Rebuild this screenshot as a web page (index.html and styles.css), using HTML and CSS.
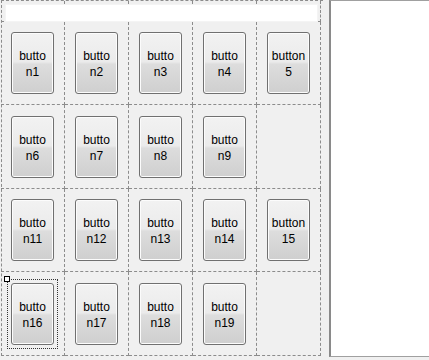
FILE: index.html
```html
<!DOCTYPE html>
<html>
<head>
<meta charset="utf-8">
<link rel="stylesheet" href="styles.css">
</head>
<body>
<div class="wrap">
  <div class="designer">
    <div class="top">
      <div class="tcell c1"></div><div class="tcell c2"></div><div class="tcell c3"></div><div class="tcell c4"></div><div class="tcell c5"></div>
      <div class="textbox"></div>
    </div>
    <div class="grid">
      <div class="cell"><button class="btn">butto<br>n1</button></div>
      <div class="cell"><button class="btn">butto<br>n2</button></div>
      <div class="cell"><button class="btn">butto<br>n3</button></div>
      <div class="cell"><button class="btn">butto<br>n4</button></div>
      <div class="cell"><button class="btn">button<br>5</button></div>
      <div class="cell"><button class="btn">butto<br>n6</button></div>
      <div class="cell"><button class="btn">butto<br>n7</button></div>
      <div class="cell"><button class="btn">butto<br>n8</button></div>
      <div class="cell"><button class="btn">butto<br>n9</button></div>
      <div class="cell"></div>
      <div class="cell"><button class="btn">butto<br>n11</button></div>
      <div class="cell"><button class="btn">butto<br>n12</button></div>
      <div class="cell"><button class="btn">butto<br>n13</button></div>
      <div class="cell"><button class="btn">butto<br>n14</button></div>
      <div class="cell"><button class="btn">button<br>15</button></div>
      <div class="cell"><div class="focus"><span class="handle"></span><button class="btn">butto<br>n16</button></div></div>
      <div class="cell"><button class="btn">butto<br>n17</button></div>
      <div class="cell"><button class="btn">butto<br>n18</button></div>
      <div class="cell"><button class="btn">butto<br>n19</button></div>
      <div class="cell"></div>
    </div>
  </div>
  <div class="panel"></div>
</div>
</body>
</html>
```
FILE: styles.css
```css
html, body {
  margin: 0;
  padding: 0;
  background: #f0f0f0;
  width: 429px;
  height: 360px;
  overflow: hidden;
}
.wrap {
  display: flex;
  align-items: flex-start;
}
.designer {
  margin-left: 1px;
  width: 321px;
  border-left: 1px dashed #8c8c8c;
  border-top: 1px dashed #8c8c8c;
}
.top {
  display: grid;
  grid-template-columns: 64px 64px 64px 64px 64px;
  grid-template-rows: 21px;
  margin-left: -1px;
}
.tcell {
  border-right: 1px dashed #8c8c8c;
  border-bottom: 1px dashed #8c8c8c;
  grid-row: 1;
}
.c1 { grid-column: 1; }
.c2 { grid-column: 2; }
.c3 { grid-column: 3; }
.c4 { grid-column: 4; }
.c5 { grid-column: 5; }
.textbox {
  grid-row: 1;
  grid-column: 1 / -1;
  margin: 3px 3px 0 4px;
  background: #fff;
  border: 1px solid #f4f4f4;
  position: relative;
}
.grid {
  display: grid;
  grid-template-columns: 64px 64px 64px 64px 64px;
  grid-template-rows: 83px 84px 83px 84px;
  margin-left: -1px;
}
.cell {
  border-right: 1px dashed #8c8c8c;
  border-bottom: 1px dashed #8c8c8c;
  display: flex;
  align-items: center;
  justify-content: center;
}
.btn {
  width: 43px;
  height: 62px;
  margin: 0;
  padding: 2px 0 0;
  border: 1px solid #707070;
  border-radius: 3px;
  background: linear-gradient(to bottom, #f2f2f2 0%, #ebebeb 48%, #dddddd 52%, #cfcfcf 100%);
  font-family: "Liberation Sans", Arial, sans-serif;
  font-size: 12px;
  line-height: 16px;
  color: #000;
  text-align: center;
  box-shadow: inset 0 0 0 1px #fcfcfc;
}
.focus {
  position: relative;
  padding: 3px;
  border: 1px dotted #333;
  display: flex;
}
.handle {
  position: absolute;
  left: -4px;
  top: -4px;
  width: 4px;
  height: 4px;
  border: 1px solid #000;
  background: #fff;
}
.panel {
  margin-left: 6px;
  width: 98px;
  height: 355px;
  background: #fff;
  border-left: 2px solid #8a8a8a;
  border-top: 1px solid #a0a0a0;
  border-bottom: 1px solid #a0a0a0;
}
```
